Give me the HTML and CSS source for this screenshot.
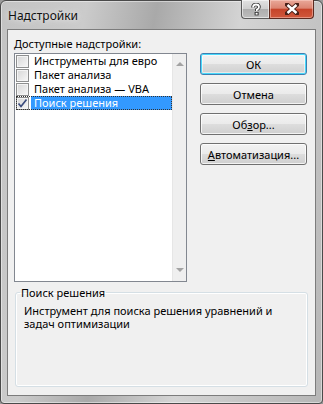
FILE: index.html
```html
<!DOCTYPE html>
<html>
<head>
    <meta charset="utf-8">
    <title>Надстройки</title>
    <link rel="stylesheet" href="styles.css">
</head>
<body>
    <div class="window">
        <div class="titlebar">
            <span class="title">Надстройки</span>
            <div class="caption-btns">
                <div class="cap-btn help">
                    <svg width="12" height="13" viewBox="0 0 12 13">
                        <path d="M3 4.5 Q3 1.5 6 1.5 Q9 1.5 9 4 Q9 5.5 6.8 6.6 L6.8 8" fill="none" stroke="#333" stroke-width="3.6" stroke-linejoin="round"/>
                        <rect x="4.6" y="9" width="4" height="3.4" fill="#333"/>
                        <path d="M3 4.5 Q3 1.5 6 1.5 Q9 1.5 9 4 Q9 5.5 6.8 6.6 L6.8 8" fill="none" stroke="#fff" stroke-width="1.8" stroke-linejoin="round"/>
                        <rect x="5.6" y="9.8" width="2" height="1.8" fill="#fff"/>
                    </svg>
                </div>
                <div class="cap-btn close">
                    <svg width="14" height="12" viewBox="0 0 14 12">
                        <path d="M2 1.5 L12 10.5 M12 1.5 L2 10.5" stroke="#4a2018" stroke-width="4.4" stroke-linecap="square"/>
                        <path d="M2.5 2 L11.5 10 M11.5 2 L2.5 10" stroke="#fff" stroke-width="2.4"/>
                    </svg>
                </div>
            </div>
        </div>
        <div class="client">
            <div class="main">
                <div class="list-label"><u>Д</u>оступные надстройки:</div>
                <div class="listbox">
                    <ul class="items">
                        <li><span class="check"></span><span class="item-text">Инструменты для евро</span></li>
                        <li><span class="check"></span><span class="item-text">Пакет анализа</span></li>
                        <li><span class="check"></span><span class="item-text">Пакет анализа — VBA</span></li>
                        <li class="selected">
                            <span class="check">
                                <svg width="11" height="11" viewBox="0 0 11 11">
                                    <path d="M1.5 5.5 L4 8.5 L9.5 1.5" fill="none" stroke="#3a4b7c" stroke-width="1.7"/>
                                </svg>
                            </span>
                            <span class="item-text">Поиск решения</span>
                        </li>
                    </ul>
                    <div class="scrollbar">
                        <span class="arrow up"></span>
                        <span class="arrow down"></span>
                    </div>
                </div>
                <div class="buttons">
                    <button class="btn default">ОК</button>
                    <button class="btn">Отмена</button>
                    <button class="btn">Об<u>з</u>ор...</button>
                    <button class="btn"><u>А</u>втоматизация...</button>
                </div>
            </div>
            <fieldset class="group">
                <legend>Поиск решения</legend>
                <p class="description">Инструмент для поиска решения уравнений и задач оптимизации</p>
            </fieldset>
        </div>
    </div>
</body>
</html>
```

FILE: styles.css
```css
* {
    margin: 0;
    padding: 0;
    box-sizing: border-box;
}

body {
    width: 323px;
    height: 404px;
    overflow: hidden;
    font-family: 'Noto Sans', 'Liberation Sans', sans-serif;
    font-size: 11px;
    color: #000;
    background: #9a9a9a;
}

.window {
    width: 323px;
    height: 404px;
    display: flex;
    flex-direction: column;
    padding: 0 6px 7px 6px;
    border: 1px solid #4a4a4a;
    border-radius: 6px 6px 4px 4px;
    background: linear-gradient(100deg, #c3c3c3 0%, #cbcbcb 22%, #a9a9a9 40%, #d4d4d4 62%, #c4c4c4 82%, #b6b6b6 100%);
    box-shadow: inset 0 0 0 1px rgba(255, 255, 255, 0.45);
}

/* title bar */
.titlebar {
    height: 28px;
    display: flex;
    justify-content: space-between;
    align-items: flex-start;
    padding: 0 2px 0 1px;
}

.title {
    margin-top: 6px;
    font-size: 12px;
    color: #111;
    text-shadow: 0 0 6px rgba(255, 255, 255, 0.9);
}

.caption-btns {
    display: flex;
    margin-top: -1px;
}

.cap-btn {
    height: 19px;
    display: flex;
    align-items: center;
    justify-content: center;
    border: 1px solid #5a5a5a;
    border-top: none;
}

.cap-btn.help {
    width: 28px;
    border-right: none;
    border-radius: 0 0 0 4px;
    background: linear-gradient(#e2e2e2 0%, #cfcfcf 48%, #aeaeae 52%, #bdbdbd 100%);
    box-shadow: inset 0 0 0 1px rgba(255, 255, 255, 0.55);
}

.cap-btn.close {
    width: 45px;
    border-radius: 0 0 4px 0;
    border-color: #5c2a20;
    background: linear-gradient(#e9a899 0%, #dc8572 45%, #c6442a 52%, #d0583c 100%);
    box-shadow: inset 0 0 0 1px rgba(255, 220, 210, 0.45);
}

/* client area */
.client {
    flex: 1;
    display: flex;
    flex-direction: column;
    padding: 7px 8px 8px 6px;
    background: #f0f0f0;
    border: 1px solid #7c7c7c;
}

.main {
    display: grid;
    grid-template-columns: 173px 107px;
    column-gap: 13px;
}

.list-label {
    grid-column: 1 / 3;
    height: 16px;
    line-height: 14px;
}

.listbox {
    height: 229px;
    display: flex;
    background: #fff;
    border: 1px solid #828790;
}

.items {
    flex: 1;
    list-style: none;
    padding: 0 0 0 1px;
}

.items li {
    height: 14px;
    display: flex;
    align-items: center;
    white-space: nowrap;
}

.check {
    width: 13px;
    height: 13px;
    flex: none;
    display: flex;
    align-items: center;
    justify-content: center;
    border: 1px solid #8e8f8f;
    background: linear-gradient(135deg, #d6d6d6, #f7f7f7);
    box-shadow: inset 0 0 0 1px #f4f4f4;
}

.item-text {
    flex: 1;
    height: 14px;
    line-height: 14px;
    margin-left: 2px;
    padding-left: 3px;
}

.items li.selected {
    outline: 1px dotted #333;
    outline-offset: -1px;
}

.items li.selected .item-text {
    background: #3399ff;
    color: #fff;
}

.scrollbar {
    width: 14px;
    display: flex;
    flex-direction: column;
    justify-content: space-between;
    align-items: center;
    padding: 8px 0 9px;
    background: #efefef;
    border-left: 1px solid #e6e6e6;
}

.arrow {
    width: 0;
    height: 0;
    border-left: 4px solid transparent;
    border-right: 4px solid transparent;
}

.arrow.up {
    border-bottom: 4px solid #a3a3a3;
}

.arrow.down {
    border-top: 4px solid #a3a3a3;
}

/* push buttons */
.buttons {
    display: flex;
    flex-direction: column;
    gap: 8px;
}

.btn {
    height: 22px;
    font-family: inherit;
    font-size: 11px;
    color: #000;
    border: 1px solid #707070;
    border-radius: 3px;
    background: linear-gradient(#f2f2f2 0%, #ebebeb 48%, #dddddd 52%, #cfcfcf 100%);
    box-shadow: inset 0 0 0 1px rgba(255, 255, 255, 0.75);
}

.btn.default {
    border-color: #3c7fb1;
    box-shadow: inset 0 0 0 1px #48d8fb, inset 0 0 0 2px rgba(255, 255, 255, 0.5);
}

/* description group */
.group {
    flex: 1;
    margin: 3px 0 0 1px;
    width: 293px;
    padding: 0 6px 0 7px;
    border: 1px solid #d5dfe5;
    border-radius: 3px;
    box-shadow: inset 0 0 0 1px #fff;
}

.group legend {
    margin-left: -3px;
    padding: 0 1px;
    line-height: 15px;
}

.description {
    margin: 4px 0 0 1px;
    line-height: 13px;
}
```
